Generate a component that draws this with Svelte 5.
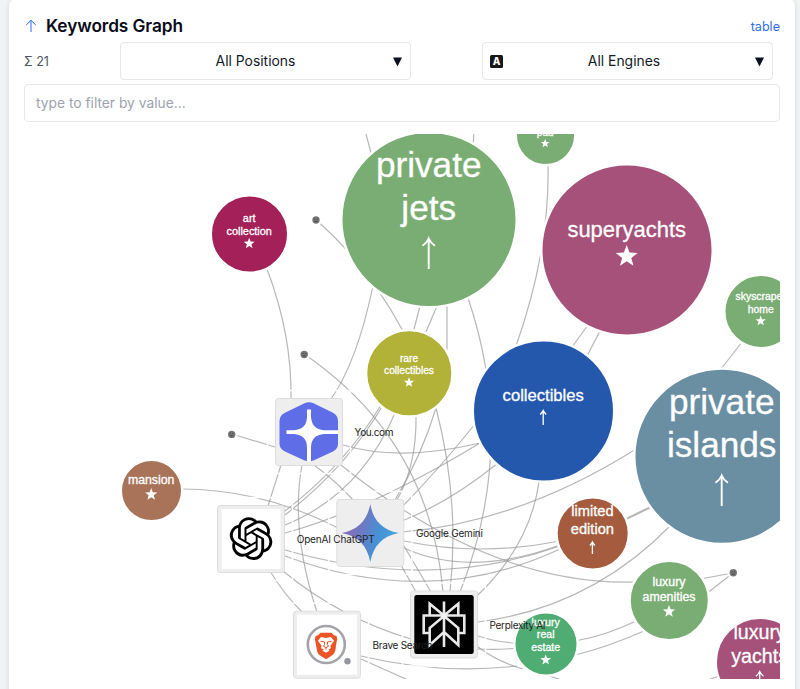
<script>
    let filterText = $state('');

    const green = '#7aad73';
    const plum = '#a55179';

    // kind is the marker that is drawn under the label
    const keywords = [
        { x: 545.5, y: 135.5, r: 28.5, color: green, size: 10, lines: [['pad', 136]], kind: 'star', my: 143.5, ms: 4.6 },
        { x: 429, y: 219.5, r: 86.5, color: green, size: 35.2, lines: [['private', 177], ['jets', 220]], kind: 'arrow', my: 238, ms: 31 },
        { x: 627, y: 250, r: 84.5, color: plum, size: 22, lines: [['superyachts', 237]], kind: 'star', my: 256.5, ms: 11.5 },
        { x: 249.5, y: 234, r: 37.5, color: '#a32058', size: 10.9, lines: [['art', 221.5], ['collection', 234.5]], kind: 'star', my: 243.5, ms: 5.8 },
        { x: 409.3, y: 373.3, r: 42, color: '#b2b138', size: 10.2, lines: [['rare', 361.5], ['collectibles', 374]], kind: 'star', my: 382.5, ms: 5.4 },
        { x: 543.5, y: 411, r: 69.5, color: '#2458ad', size: 16.6, lines: [['collectibles', 401.3]], kind: 'arrow', my: 410, ms: 15 },
        { x: 761, y: 311.5, r: 35.5, color: green, size: 10.4, lines: [['skyscraper', 299.5], ['home', 312.5]], kind: 'star', my: 321, ms: 5.4 },
        { x: 722, y: 456.3, r: 86.5, color: '#6a8fa3', size: 35.2, lines: [['private', 414], ['islands', 457]], kind: 'arrow', my: 475, ms: 31 },
        { x: 151.5, y: 490.6, r: 29.5, color: '#a87359', size: 12.3, lines: [['mansion', 484]], kind: 'star', my: 494.5, ms: 6.4 },
        { x: 592.7, y: 533.5, r: 35, color: '#a55c3e', size: 14.7, lines: [['limited', 516.3], ['edition', 534.3]], kind: 'arrow', my: 541.5, ms: 12.5 },
        { x: 669.3, y: 600.5, r: 38.5, color: green, size: 12.4, lines: [['luxury', 586], ['amenities', 601]], kind: 'star', my: 611.5, ms: 6.4 },
        { x: 546, y: 644, r: 30.5, color: '#4fac73', size: 10.6, lines: [['luxury', 625.5], ['real', 638], ['estate', 650.5]], kind: 'star', my: 660, ms: 5.6 },
        { x: 760, y: 662, r: 43, color: plum, size: 19.7, lines: [['luxury', 638.8], ['yachts', 662.5]], kind: 'arrow', my: 671, ms: 19 }
    ];

    const edges = [
        'M267 269Q292 335 291 398',
        'M366 134L371 153',
        'M473.7 134L473.3 145',
        'M316 220Q366 263 403 331',
        'M373 286Q357 362 331 399M281 465L268 506',
        'M420 306L413 333',
        'M437 306L425 334',
        'M447 305L447 350',
        'M468 298Q518 445 460 592',
        'M548 164Q550 250 516 346',
        'M539 482Q530 545 478 595',
        'M588 325L572 347',
        'M600 331L587 356',
        'M742 342L721 369',
        'M636 449Q520 522 402 532',
        'M475 424Q440 468 402 507',
        'M480 443Q370 510 285 533',
        'M498 463Q450 502 402 521',
        'M232 434L275 447',
        'M343 445Q400 462 480 443',
        'M304 354Q430 440 443 592',
        'M436 408Q460 500 450 592',
        'M416 414Q417 465 397 500',
        'M436 408Q422 455 395 500',
        'M381 405Q345 465 285 511',
        'M383 405Q347 467 285 515',
        'M395 413Q360 495 285 525',
        'M181 489Q262 489 338 528',
        'M302 465Q290 530 317 612',
        'M314 465Q370 505 416 592',
        'M341 465Q490 585 633 582L669 583',
        'M700 579L733 573',
        'M404 546L431 592',
        'M285 550Q430 592 560 546',
        'M285 556Q430 610 560 549',
        'M404 541Q480 557 560 541',
        'M404 548Q470 578 560 545',
        'M625 519L652 506',
        'M625 520L652 507',
        'M671 525Q590 608 478 622',
        'M270 571Q283 593 302 612',
        'M283 571Q340 618 411 639',
        'M478 636Q500 643 518 643',
        'M478 649Q500 650 518 648',
        'M478 647Q498 662 523 669',
        'M361 656Q440 675 517 666',
        'M361 659L408 680',
        'M549 676L562 680',
        'M575 641Q605 636 636 621',
        'M575 655Q605 648 644 631',
        'M706 594L733 573',
        'M708 680L719 676'
    ];

    const engines = [
        { id: 'you', name: 'You.com', x: 275, y: 398, lx: 354.5, w: 39, ly: 436 },
        { id: 'gemini', name: 'Google Gemini', x: 336.3, y: 499, lx: 416, w: 67, ly: 536.5 },
        { id: 'chatgpt', name: 'OpenAI ChatGPT', x: 217, y: 505, lx: 296.7, w: 78, ly: 542.5 },
        { id: 'brave', name: 'Brave Search', x: 293, y: 610.7, lx: 372.5, w: 60, ly: 648.5 },
        { id: 'perplexity', name: 'Perplexity AI', x: 410, y: 590.5, lx: 489.5, w: 56, ly: 628.5 }
    ];

    const dots = [
        { x: 316, y: 220 },
        { x: 304.2, y: 354.5 },
        { x: 231.7, y: 434.4 },
        { x: 733.3, y: 572.7 }
    ];

    const starPoints = (cx, cy, r) => {
        let points = [];
        for (let i = 0; i < 10; i++) {
            let len = i % 2 == 0 ? r : r * 0.42;
            let angle = -Math.PI / 2 + (i * Math.PI) / 5;
            points.push(`${cx + len * Math.cos(angle)},${cy + len * Math.sin(angle)}`);
        }
        return points.join(' ');
    };

    const arrowPath = (cx, top, h) => {
        let wing = h * 0.2;
        return `M${cx} ${top + h}V${top + 1}M${cx - wing} ${top + wing + 1.5}Q${cx - wing * 0.3} ${top + wing * 0.8} ${cx} ${top + 0.5}Q${cx + wing * 0.3} ${top + wing * 0.8} ${cx + wing} ${top + wing + 1.5}`;
    };
</script>

<div class="card">
    <header>
        <svg class="up" viewBox="0 0 12 14"><path d="M6 13V1.5M1.2 6 6 1.3 10.8 6" /></svg>
        <h2>Keywords Graph</h2>
        <a href="#table">table</a>
    </header>

    <div class="controls">
        <span class="total">Σ 21</span>
        <button class="select positions">
            <span>All Positions</span>
            <svg class="caret" viewBox="0 0 10 10"><path d="M0 0H10L5 10Z" /></svg>
        </button>
        <button class="select engines">
            <svg class="badge" viewBox="0 0 13 13">
                <rect width="13" height="13" rx="1.5" />
                <text x="6.5" y="10.2" text-anchor="middle">A</text>
            </svg>
            <span>All Engines</span>
            <svg class="caret" viewBox="0 0 10 10"><path d="M0 0H10L5 10Z" /></svg>
        </button>
    </div>

    <input type="text" placeholder="type to filter by value..." bind:value={filterText} />

    <svg class="graph" viewBox="24 134 756 545">
        <defs>
            <linearGradient id="geminiFill" x1="0" y1="0.35" x2="1" y2="0.65">
                <stop offset="0" stop-color="#9168b5" />
                <stop offset="0.35" stop-color="#6d79c4" />
                <stop offset="0.65" stop-color="#4592d6" />
                <stop offset="1" stop-color="#4aa5dc" />
            </linearGradient>
        </defs>

        {#each edges as d}
            <path class="edge" {d} />
        {/each}

        <path class="dotEars" d="M312.3 216H319.7V220H312.3Z" />
        {#each dots as dot}
            <g transform="translate({dot.x} {dot.y})">
                <circle class="dotHalo" r="6" />
                <circle class="dot" r="3.7" />
                <path class="dotMark" d="M-2-1H-.8M.8-1H2M-1.5 1.4H1.5" />
            </g>
        {/each}

        {#each keywords as k}
            <circle class="keyword" cx={k.x} cy={k.y} r={k.r + 1.3} fill={k.color} />
            {#each k.lines as [text, y]}
                <text class="keywordLabel" x={k.x - 0.3} {y} font-size={k.size}>{text}</text>
            {/each}
            {#if k.kind == 'star'}
                <polygon class="star" points={starPoints(k.x - 0.3, k.my, k.ms)} />
            {:else}
                <path class="arrow" d={arrowPath(k.x - 0.3, k.my, k.ms)} stroke-width={k.ms > 20 ? 1.9 : 1.3} />
            {/if}
        {/each}

        {#each engines as e}
            <g transform="translate({e.x} {e.y})">
                <rect class="ring" x="-7.5" y="-7.5" width="83" height="83" />
                <rect class="tile" x="0.5" y="0.5" width="67" height="67" rx="3" />
                {#if e.id == 'you'}
                    <path fill="#5f6de6" d="M29.5 5.3Q34 3 38.5 5.3L57.5 14.6Q63 17.5 63 23V46Q63 51 58 53.5L39 62.2Q34 64 29 62.2L10 53.5Q4.500 51 4.500 46V23Q4.500 17.5 10.500 14.6Z" />
                    <path fill="#fff" d="M32 11.5H36V19Q37 31.5 49 32.2H63.3V36H49Q36.5 37 36 49V63.5H32V49Q31.5 37 19 36H11.5V32.2H19Q31.5 31.5 32 19Z" />
                {:else if e.id == 'gemini'}
                    <path fill="url(#geminiFill)" d="M34 5C36.5 20 45 31 62.5 34C46 37 37 47 34 63C31 47 22 37 5.5 34C22 31 31 21 34 5Z" />
                {:else if e.id == 'chatgpt'}
                    <rect class="paper" x="4.5" y="4" width="59" height="60" />
                    <path
                        transform="translate(12.7 12.2) scale(1.78)"
                        d="M22.2819 9.8211a5.9847 5.9847 0 0 0-.5157-4.9108 6.0462 6.0462 0 0 0-6.5098-2.9A6.0651 6.0651 0 0 0 4.9807 4.1818a5.9847 5.9847 0 0 0-3.9977 2.9 6.0462 6.0462 0 0 0 .7427 7.0966 5.98 5.98 0 0 0 .511 4.9107 6.051 6.051 0 0 0 6.5146 2.9001A5.9847 5.9847 0 0 0 13.2599 24a6.0557 6.0557 0 0 0 5.7718-4.2058 5.9894 5.9894 0 0 0 3.9977-2.9001 6.0557 6.0557 0 0 0-.7475-7.0729zm-9.022 12.6081a4.4755 4.4755 0 0 1-2.8764-1.0408l.1419-.0804 4.7783-2.7582a.7948.7948 0 0 0 .3927-.6813v-6.7369l2.02 1.1686a.071.071 0 0 1 .038.052v5.5826a4.504 4.504 0 0 1-4.4945 4.4944zm-9.6607-4.1254a4.4708 4.4708 0 0 1-.5346-3.0137l.142.0852 4.783 2.7582a.7712.7712 0 0 0 .7806 0l5.8428-3.3685v2.3324a.0804.0804 0 0 1-.0332.0615L9.74 19.9502a4.4992 4.4992 0 0 1-6.1408-1.6464zM2.3408 7.8956a4.485 4.485 0 0 1 2.3655-1.9728V11.6a.7664.7664 0 0 0 .3879.6765l5.8144 3.3543-2.0201 1.1685a.0757.0757 0 0 1-.071 0l-4.8303-2.7865A4.504 4.504 0 0 1 2.3408 7.872zm16.5963 3.8558L13.1038 8.364 15.1192 7.2a.0757.0757 0 0 1 .071 0l4.8303 2.7913a4.4944 4.4944 0 0 1-.6765 8.1042v-5.6772a.79.79 0 0 0-.407-.667zm2.0107-3.0231l-.142-.0852-4.7735-2.7818a.7759.7759 0 0 0-.7854 0L9.409 9.2297V6.8974a.0662.0662 0 0 1 .0284-.0615l4.8303-2.7866a4.4992 4.4992 0 0 1 6.6802 4.66zM8.3065 12.863l-2.02-1.1638a.0804.0804 0 0 1-.038-.0567V6.0742a4.4992 4.4992 0 0 1 7.3757-3.4537l-.142.0805L8.704 5.459a.7948.7948 0 0 0-.3927.6813zm1.0976-2.3654l2.602-1.4998 2.6069 1.4998v2.9994l-2.5974 1.4997-2.6067-1.4997Z"
                    />
                {:else if e.id == 'brave'}
                    <rect class="paper" x="4" y="4" width="60" height="60" />
                    <circle cx="33.3" cy="33.8" r="18.5" fill="#fff" stroke="#a3a4ab" stroke-width="2.6" />
                    <circle cx="54.5" cy="50.5" r="3.2" fill="#94959e" />
                    <path fill="#eb5424" d="M27.5 22H38.5L41 24.6 43.5 25.2 44.3 28.5 43.6 31 42.3 40Q41.5 43 38.5 45L33.2 48.5 27.5 45Q24.5 43 24 40L22.4 31 22 28.5 22.5 25.2 25 24.6Z" />
                    <path fill="#fff" d="M28 26.3 33 27.2 38 26.3 41 30 37.5 35 38 37.5 35.5 38.5 36.5 40 33 42 29.5 40 30.5 38.5 28 37.5 28.5 35 25 30Z" />
                    <path fill="none" stroke="#eb5424" d="M27.5 30.5 31.5 31.2V34L30.5 35.5 33 37 35.5 35.5 34.5 34V31.2L38.5 30.5M33 37V39" />
                {:else}
                    <rect x="4.3" y="4.5" width="59.4" height="59" rx="2.5" fill="#000" />
                    <path class="asterisk" d="M34 11V56.5M19.7 25V13.3L34 25 48.3 13.3V25M19.7 42.5H13.7V25H54.3V42.5H48.3M34 25.5 19.7 37.5V54.5L34 41.5 48.3 54.5V37.5Z" />
                    <circle cx="34" cy="25.5" r="2.8" fill="#f4f4f4" />
                {/if}
            </g>
        {/each}

        {#each engines as e}
            <text class="engineLabel" x={e.lx} y={e.ly} textLength={e.w}>{e.name}</text>
        {/each}
    </svg>
</div>

<style>
    :global(body) {
        margin: 0;
        background: #f1f3f5;
        overflow: hidden;
    }

    .card {
        box-sizing: border-box;
        width: 786px;
        height: 710px;
        margin: -2px 0 0 9px;
        padding: 15px 15px 0;
        background: #fff;
        border-radius: 8px;
        box-shadow: 0 1px 5px rgb(0 0 0 / 12%);
        font-family: Inter, "Liberation Sans", sans-serif;
        color: #111827;
    }

    header {
        display: flex;
        align-items: center;
        height: 24px;
    }

    .up {
        width: 12px;
        height: 14px;
        margin: 2px 9px 0 1px;
        fill: none;
        stroke: #2f6df0;
        stroke-width: 1;
    }

    h2 {
        margin: 0;
        font-size: 17.3px;
        font-weight: 600;
        letter-spacing: -0.1px;
        color: #090b18;
    }

    header a {
        margin-left: auto;
        padding-top: 2px;
        font-size: 12.6px;
        color: #316ee8;
        text-decoration: none;
    }

    .controls {
        display: flex;
        align-items: center;
        height: 38px;
        margin-top: 5px;
    }

    .total {
        width: 95.5px;
        font-size: 12.5px;
        color: #4b5563;
    }

    .select {
        display: flex;
        align-items: center;
        box-sizing: border-box;
        width: 291px;
        height: 38px;
        padding: 0 8px;
        border: 1px solid #e5e7eb;
        border-radius: 4px;
        background: #fff;
        font: inherit;
        font-size: 13.9px;
        color: #111827;
    }

    .select span {
        flex: 1;
        text-align: center;
    }

    .positions span,
    .engines span {
        padding-right: 10px;
    }

    .engines {
        margin-left: 71.5px;
    }

    .caret {
        width: 9px;
        height: 10px;
        margin-top: 1px;
        fill: #0b1020;
    }

    .badge {
        width: 13px;
        height: 13px;
        margin-left: -1px;
        fill: #18181b;
    }

    .badge text {
        font-size: 10px;
        font-weight: 800;
        fill: #fff;
    }

    input {
        display: block;
        box-sizing: border-box;
        width: 756px;
        height: 38px;
        margin-top: 4px;
        padding: 0 11px;
        border: 1px solid #e5e7eb;
        border-radius: 4px;
        font: inherit;
        font-size: 13.8px;
        outline: none;
    }

    input::placeholder {
        color: #9ca3af;
    }

    .graph {
        display: block;
        width: 756px;
        height: 545px;
        margin-top: 12px;
        overflow: hidden;
    }

    .edge {
        fill: none;
        stroke: #999;
        stroke-opacity: 0.7;
        stroke-width: 1.2;
    }

    .dotHalo {
        fill: #fff;
    }

    .dot {
        fill: #777;
    }

    .dotMark {
        fill: none;
        stroke: #444;
        stroke-width: 1;
    }

    .dotEars {
        fill: #777;
        opacity: 0.6;
    }

    .keyword {
        stroke: #fff;
        stroke-width: 2.6;
    }

    .keywordLabel {
        font-family: "Liberation Sans", Arial, sans-serif;
        text-anchor: middle;
        fill: #fff;
        stroke: #fff;
        stroke-width: 0.3;
    }

    .star {
        fill: #fff;
    }

    .arrow {
        fill: none;
        stroke: #fff;
    }

    .ring {
        fill: none;
        stroke: #fff;
        stroke-width: 1.5;
    }

    .tile {
        fill: #eee;
        stroke: #ddd;
        stroke-width: 1;
    }

    .paper {
        fill: #fff;
    }

    .asterisk {
        fill: none;
        stroke: #e9e9e9;
        stroke-width: 2.6;
    }

    .engineLabel {
        font-size: 10px;
        fill: #222;
    }
</style>
